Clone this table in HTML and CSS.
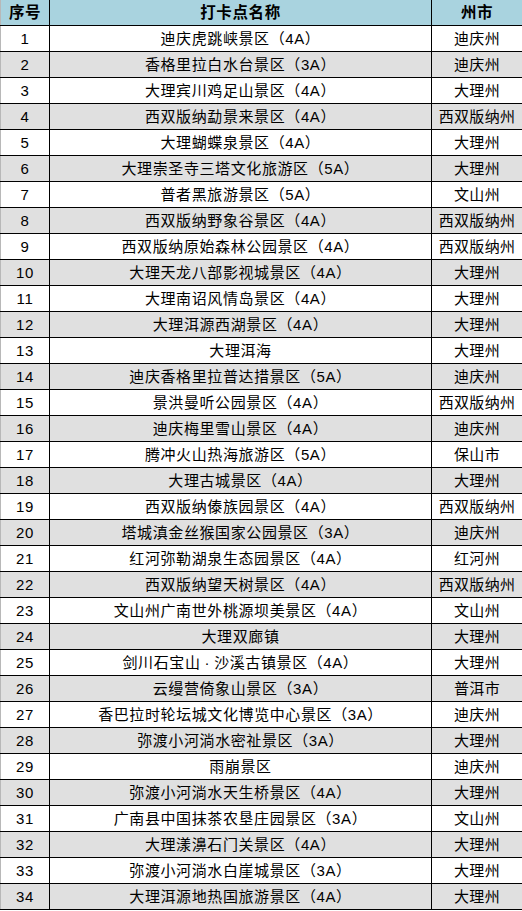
FILE: index.html
```html
<!DOCTYPE html>
<html lang="zh-CN">
<head>
<meta charset="utf-8">
<title>打卡点名称</title>
<link rel="stylesheet" href="styles.css">
</head>
<body>
<table class="sheet">
<colgroup><col class="c1"><col class="c2"><col class="c3"></colgroup>
<thead>
<tr><th>序号</th><th>打卡点名称</th><th>州市</th></tr>
</thead>
<tbody>
<tr><td>1</td><td>迪庆虎跳峡景区（4A）</td><td>迪庆州</td></tr>
<tr><td>2</td><td>香格里拉白水台景区（3A）</td><td>迪庆州</td></tr>
<tr><td>3</td><td>大理宾川鸡足山景区（4A）</td><td>大理州</td></tr>
<tr><td>4</td><td>西双版纳勐景来景区（4A）</td><td>西双版纳州</td></tr>
<tr><td>5</td><td>大理蝴蝶泉景区（4A）</td><td>大理州</td></tr>
<tr><td>6</td><td>大理崇圣寺三塔文化旅游区（5A）</td><td>大理州</td></tr>
<tr><td>7</td><td>普者黑旅游景区（5A）</td><td>文山州</td></tr>
<tr><td>8</td><td>西双版纳野象谷景区（4A）</td><td>西双版纳州</td></tr>
<tr><td>9</td><td>西双版纳原始森林公园景区（4A）</td><td>西双版纳州</td></tr>
<tr><td>10</td><td>大理天龙八部影视城景区（4A）</td><td>大理州</td></tr>
<tr><td>11</td><td>大理南诏风情岛景区（4A）</td><td>大理州</td></tr>
<tr><td>12</td><td>大理洱源西湖景区（4A）</td><td>大理州</td></tr>
<tr><td>13</td><td>大理洱海</td><td>大理州</td></tr>
<tr><td>14</td><td>迪庆香格里拉普达措景区（5A）</td><td>迪庆州</td></tr>
<tr><td>15</td><td>景洪曼听公园景区（4A）</td><td>西双版纳州</td></tr>
<tr><td>16</td><td>迪庆梅里雪山景区（4A）</td><td>迪庆州</td></tr>
<tr><td>17</td><td>腾冲火山热海旅游区（5A）</td><td>保山市</td></tr>
<tr><td>18</td><td>大理古城景区（4A）</td><td>大理州</td></tr>
<tr><td>19</td><td>西双版纳傣族园景区（4A）</td><td>西双版纳州</td></tr>
<tr><td>20</td><td>塔城滇金丝猴国家公园景区（3A）</td><td>迪庆州</td></tr>
<tr><td>21</td><td>红河弥勒湖泉生态园景区（4A）</td><td>红河州</td></tr>
<tr><td>22</td><td>西双版纳望天树景区（4A）</td><td>西双版纳州</td></tr>
<tr><td>23</td><td>文山州广南世外桃源坝美景区（4A）</td><td>文山州</td></tr>
<tr><td>24</td><td>大理双廊镇</td><td>大理州</td></tr>
<tr><td>25</td><td>剑川石宝山<span class="mid">·</span>沙溪古镇景区（4A）</td><td>大理州</td></tr>
<tr><td>26</td><td>云缦营倚象山景区（3A）</td><td>普洱市</td></tr>
<tr><td>27</td><td>香巴拉时轮坛城文化博览中心景区（3A）</td><td>迪庆州</td></tr>
<tr><td>28</td><td>弥渡小河淌水密祉景区（3A）</td><td>大理州</td></tr>
<tr><td>29</td><td>雨崩景区</td><td>迪庆州</td></tr>
<tr><td>30</td><td>弥渡小河淌水天生桥景区（4A）</td><td>大理州</td></tr>
<tr><td>31</td><td>广南县中国抹茶农垦庄园景区（3A）</td><td>文山州</td></tr>
<tr><td>32</td><td>大理漾濞石门关景区（4A）</td><td>大理州</td></tr>
<tr><td>33</td><td>弥渡小河淌水白崖城景区（3A）</td><td>大理州</td></tr>
<tr><td>34</td><td>大理洱源地热国旅游景区（4A）</td><td>大理州</td></tr>
</tbody>
</table>
</body>
</html>
```
FILE: styles.css
```css
html, body {
  margin: 0;
  padding: 0;
  background: #ffffff;
}
.sheet {
  border-collapse: collapse;
  table-layout: fixed;
  width: 522px;
  font-family: "Liberation Sans", "Noto Sans CJK SC", sans-serif;
  font-size: 15px;
  letter-spacing: 0.6px;
  color: #000;
}
.c1 { width: 49px; }
.c2 { width: 382px; }
.c3 { width: 91px; }
.sheet th,
.sheet td {
  height: 25px;
  padding: 0;
  text-align: center;
  vertical-align: middle;
  border-right: 1px solid #000;
  border-bottom: 1px solid #000;
  line-height: 25px;
  white-space: nowrap;
  overflow: hidden;
}
.sheet th:first-child,
.sheet td:first-child {
  border-left: 1px solid #b8b8b8;
}
.sheet th {
  background: #a9d3df;
  font-weight: bold;
  font-size: 15.5px;
}
.sheet td:nth-child(3) {
  letter-spacing: 0.3px;
}
.sheet tbody tr:nth-child(even) td {
  background: #e0e0e0;
}
.mid {
  margin: 0 4px;
}
```
